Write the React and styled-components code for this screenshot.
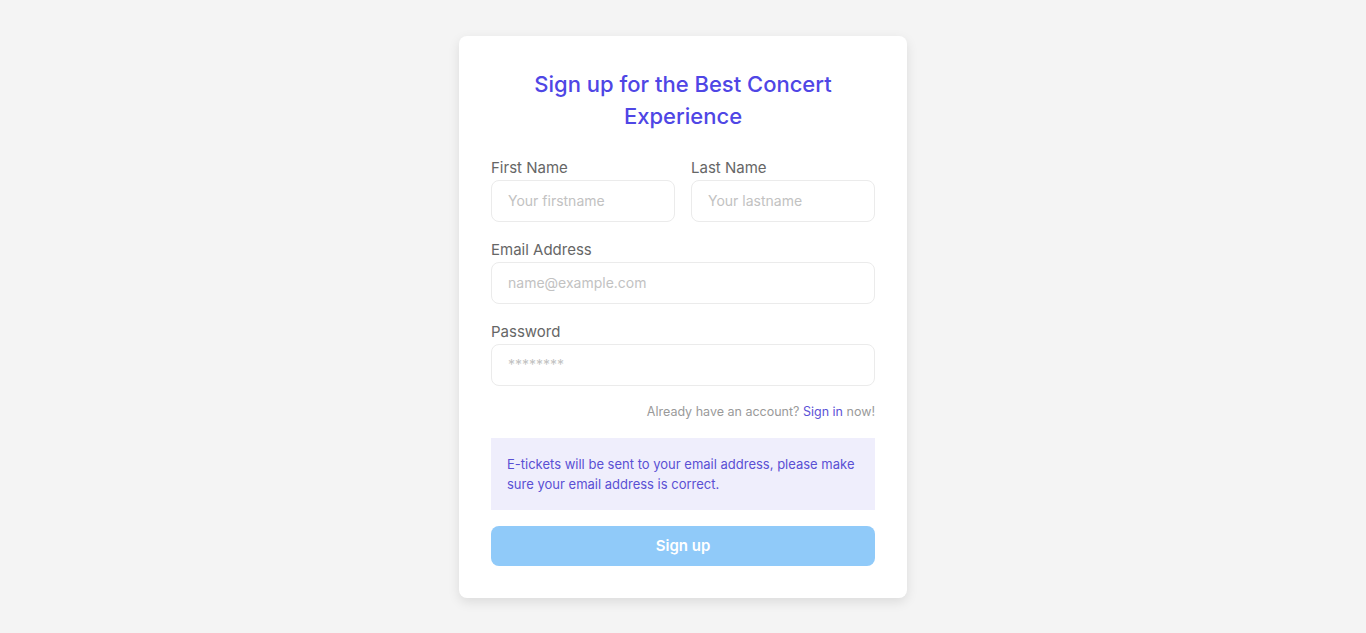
import { useState } from 'react'
import styled, { createGlobalStyle } from 'styled-components'

const Global = createGlobalStyle`
  * { box-sizing: border-box; }
  body {
    margin: 0;
    background: #f4f4f4;
    font-family: Inter, "Liberation Sans", sans-serif;
  }
`

const Pagina = styled.div`
  min-height: 100vh;
  display: flex;
  align-items: center;
  justify-content: center;
`

const Tarjeta = styled.form`
  width: 448px;
  background: #ffffff;
  border-radius: 8px;
  padding: 32px;
  box-shadow: 0 4px 12px rgba(0, 0, 0, 0.1);
`

const Titulo = styled.h1`
  margin: 0 0 24px;
  text-align: center;
  font-size: 22px;
  line-height: 32px;
  font-weight: 500;
  color: #4f46e5;
  padding: 0 32px;
`

const Fila = styled.div`
  display: grid;
  grid-template-columns: minmax(0, 1fr) minmax(0, 1fr);
  gap: 16px;
  margin-bottom: 16px;
`

const Campo = styled.div`
  display: flex;
  flex-direction: column;
  min-width: 0;
  margin-bottom: ${(p) => (p.$enFila ? '0' : '16px')};
`

const Etiqueta = styled.label`
  font-size: 15px;
  line-height: 24px;
  font-weight: 400;
  color: #666666;
`

const Entrada = styled.input`
  width: 100%;
  height: 42px;
  border: 1px solid #ebebeb;
  border-radius: 8px;
  padding: 0 16px;
  font-family: inherit;
  font-size: 14px;
  color: #333;
  outline: none;

  &::placeholder {
    color: #c2c2c2;
  }
`

const Cuenta = styled.p`
  margin: 0 0 16px;
  text-align: right;
  font-size: 12.5px;
  line-height: 20px;
  color: #9a9a9a;

  a {
    color: #5b52d6;
    text-decoration: none;
  }
`

const Aviso = styled.div`
  background: #efeefc;
  color: #5a50d4;
  font-size: 13px;
  line-height: 20px;
  padding: 16px;
  margin-bottom: 16px;
`

const Boton = styled.button`
  width: 100%;
  height: 40px;
  border: none;
  border-radius: 8px;
  background: #90caf9;
  color: #ffffff;
  font-family: inherit;
  font-size: 15px;
  font-weight: 600;
  cursor: pointer;
`

const App = () => {
  const [datos, setDatos] = useState({ nombre: '', apellido: '', email: '', clave: '' })

  const cambiar = (campo) => (evento) =>
    setDatos({ ...datos, [campo]: evento.target.value })

  return (
    <Pagina>
      <Global />
      <Tarjeta onSubmit={(e) => e.preventDefault()}>
        <Titulo>Sign up for the Best Concert Experience</Titulo>

        <Fila>
          <Campo $enFila>
            <Etiqueta>First Name</Etiqueta>
            <Entrada placeholder="Your firstname" value={datos.nombre} onChange={cambiar('nombre')} />
          </Campo>
          <Campo $enFila>
            <Etiqueta>Last Name</Etiqueta>
            <Entrada placeholder="Your lastname" value={datos.apellido} onChange={cambiar('apellido')} />
          </Campo>
        </Fila>

        <Campo>
          <Etiqueta>Email Address</Etiqueta>
          <Entrada placeholder="name@example.com" value={datos.email} onChange={cambiar('email')} />
        </Campo>

        <Campo>
          <Etiqueta>Password</Etiqueta>
          <Entrada type="password" placeholder="********" value={datos.clave} onChange={cambiar('clave')} />
        </Campo>

        <Cuenta>
          Already have an account? <a href="#">Sign in</a> now!
        </Cuenta>

        <Aviso>
          E-tickets will be sent to your email address, please make sure your email address is correct.
        </Aviso>

        <Boton type="submit">Sign up</Boton>
      </Tarjeta>
    </Pagina>
  )
}

export default App
